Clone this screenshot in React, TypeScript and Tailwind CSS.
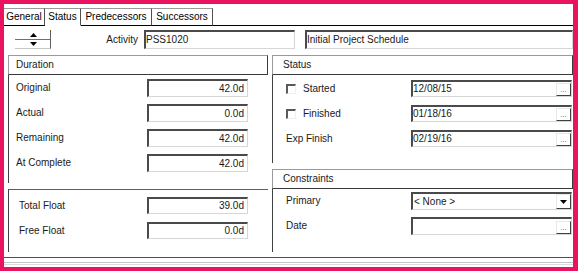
import type { ReactNode } from "react";

const TABS = [
  { label: "General", w: "w-[41px]" },
  { label: "Status", w: "w-[36px]", active: true },
  { label: "Predecessors", w: "w-[71px]" },
  { label: "Successors", w: "w-[61px]" },
];

function Field({
  children,
  className = "",
  align = "left",
  tall = false,
}: {
  children?: ReactNode;
  className?: string;
  align?: "left" | "right";
  tall?: boolean;
}) {
  return (
    <div
      className={`relative flex items-center bg-white border-t-2 border-l-2 border-t-[#4a4a4a] border-l-[#4a4a4a] border-b border-r border-b-[#d6d6d6] border-r-[#d6d6d6] ${
        tall ? "h-[18px]" : "h-[17px]"
      } ${align === "right" ? "justify-end pr-[3px]" : "pl-0"} ${className}`}
    >
      {children}
    </div>
  );
}

function DotsButton() {
  return (
    <span className="absolute right-0 bottom-0 flex h-[13px] w-[15px] items-end justify-center border-t border-l border-t-[#e8e8e8] border-l-[#e8e8e8] border-b border-r border-b-[#404040] border-r-[#404040] bg-white pb-[1px] text-[8px] leading-none text-[#555]">
      ...
    </span>
  );
}

function ArrowButton() {
  return (
    <span className="absolute right-0 top-0 flex h-[15px] w-[15px] items-center justify-center border-t border-l border-t-[#e8e8e8] border-l-[#e8e8e8] border-b border-r border-b-[#404040] border-r-[#404040] bg-white">
      <svg width="7" height="4" viewBox="0 0 7 4">
        <path d="M0 0h7L3.5 4z" fill="#000" />
      </svg>
    </span>
  );
}

function Header({ title }: { title: string }) {
  return (
    <div className="flex h-[20px] items-center border border-[#9a9a9a] border-r-[#3a3a3a] border-b-[#3a3a3a] pl-[7px]">
      {title}
    </div>
  );
}

function DurRow({ label, value }: { label: string; value: string }) {
  return (
    <div className="flex h-[25px] items-start">
      <span className="flex h-[18px] w-[131px] items-center">{label}</span>
      <Field className="w-[101px]" align="right" tall>
        {value}
      </Field>
    </div>
  );
}

function Check() {
  return (
    <span className="mr-[7px] inline-block h-[10px] w-[10px] border-t-2 border-l-2 border-t-[#5a5a5a] border-l-[#5a5a5a] border-b border-r border-b-[#f0f0f0] border-r-[#f0f0f0] bg-white" />
  );
}

function StatusRow({ label, value, check }: { label: string; value: string; check?: boolean }) {
  return (
    <div className="flex h-[25px] items-start">
      <span className="flex h-[17px] w-[125px] items-center">
        {check && <Check />}
        {label}
      </span>
      <Field className="flex-1">
        {value}
        <DotsButton />
      </Field>
    </div>
  );
}

export default function App() {
  return (
    <div className="h-[271px] w-[578px] bg-[#ea1360] pt-[4px] pl-[4px] pr-[5px] pb-[4px] font-['Liberation_Sans',Arial,sans-serif] text-[10px] leading-none text-[#1a1a1a]">
      <div className="flex h-full flex-col bg-white">
        {/* tab strip */}
        <div className="flex h-[22px] items-end pt-[4px]">
          {TABS.map((t) => (
            <div
              key={t.label}
              className={`flex h-[18px] items-center justify-center border-t border-r border-t-[#9a9a9a] border-r-[#505050] text-black ${t.w} ${
                t.active ? "border-b border-b-white" : "border-b border-b-black"
              }`}
            >
              {t.label}
            </div>
          ))}
          <div className="h-[18px] flex-1 border-b border-black" />
        </div>

        {/* activity row */}
        <div className="flex h-[28px] items-start pt-[4px] pl-[11px]">
          <div className="flex h-[19px] w-[36px] flex-col border-r border-b border-r-[#606060] border-b-[#c8c8c8]">
            <div className="flex h-[10px] items-center justify-center border-b border-[#707070] pl-[2px]">
              <svg width="7" height="4" viewBox="0 0 7 4">
                <path d="M3.5 0L7 4H0z" fill="#000" />
              </svg>
            </div>
            <div className="flex flex-1 items-center justify-center pl-[2px]">
              <svg width="7" height="4" viewBox="0 0 7 4">
                <path d="M0 0h7L3.5 4z" fill="#000" />
              </svg>
            </div>
          </div>
          <span className="flex h-[19px] w-[87px] items-center justify-end">Activity</span>
          <Field className="ml-[6px] h-[19px] w-[151px]">PSS1020</Field>
          <Field className="ml-[10px] h-[19px] flex-1">Initial Project Schedule</Field>
        </div>

        {/* main */}
        <div className="flex h-[198px] pt-[1px]">
          <div className="ml-[4px] flex w-[260px] flex-col">
            <Header title="Duration" />
            <div className="border-l border-[#404040] pt-[4px] pb-[4px] pl-[7px]">
              <DurRow label="Original" value="42.0d" />
              <DurRow label="Actual" value="0.0d" />
              <DurRow label="Remaining" value="42.0d" />
              <DurRow label="At Complete" value="42.0d" />
            </div>
            <div className="mt-[6px] border-t border-l border-t-[#606060] border-l-[#404040] pt-[7px] pb-[5px] pl-[10px]">
              <div className="flex h-[25px] items-start">
                <span className="flex h-[17px] w-[128px] items-center">Total Float</span>
                <Field className="w-[101px]" align="right">39.0d</Field>
              </div>
              <div className="flex h-[25px] items-start">
                <span className="flex h-[17px] w-[128px] items-center">Free Float</span>
                <Field className="w-[101px]" align="right">0.0d</Field>
              </div>
            </div>
          </div>

          <div className="ml-[4px] flex flex-1 flex-col">
            <div className="pl-0">
              <div className="flex h-[20px] items-center border border-[#9a9a9a] border-r-[#3a3a3a] border-b-[#3a3a3a] pl-[10px]">
                Status
              </div>
            </div>
            <div className="border-l border-[#404040] pt-[5px] pb-[8px] pl-[13px] pr-[1px]">
              <StatusRow label="Started" value="12/08/15" check />
              <StatusRow label="Finished" value="01/18/16" check />
              <StatusRow label="Exp Finish" value="02/19/16" />
            </div>
            <div className="mt-[6px] flex h-[20px] items-center border border-[#9a9a9a] border-r-[#3a3a3a] border-b-[#3a3a3a] pl-[10px]">
              Constraints
            </div>
            <div className="flex-1 border-l border-[#404040] pt-[3px] pl-[13px] pr-[1px]">
              <div className="flex h-[25px] items-start">
                <span className="flex h-[18px] w-[125px] items-center">Primary</span>
                <Field className="flex-1" tall>
                  <span className="pl-[1px]">&lt; None &gt;</span>
                  <ArrowButton />
                </Field>
              </div>
              <div className="flex h-[25px] items-start">
                <span className="flex h-[18px] w-[125px] items-center">Date</span>
                <Field className="flex-1" tall>
                  <DotsButton />
                </Field>
              </div>
            </div>
          </div>
        </div>

        {/* bottom edge */}
        <div className="h-[15px] pt-[5px]">
          <div className="border-t border-[#505050]" />
          <div className="mt-[4px] border-t border-[#c4c4c4]" />
          <div className="mt-[1px] border-t border-[#dadada]" />
        </div>
      </div>
    </div>
  );
}
